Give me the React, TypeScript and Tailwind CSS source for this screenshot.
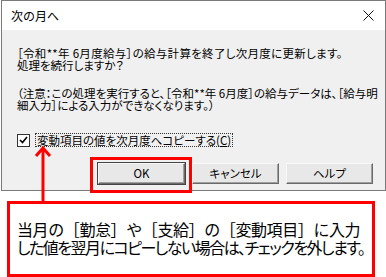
export default function App() {
  const buttons = ["OK", "キャンセル", "ヘルプ"];

  return (
    <div className="relative w-[386px] h-[277px] bg-white overflow-hidden text-black font-['Noto_Sans_CJK_JP','Noto_Sans',sans-serif]">
      {/* dialog window */}
      <div className="ml-[1px] w-[385px] h-[191px] border border-[#7a7a7a] flex flex-col">
        <div className="h-[29px] bg-white flex items-center justify-between pl-[9px] pr-[10px]">
          <span className="text-[12px] leading-none">次の月へ</span>
          <svg width="11" height="11" viewBox="0 0 11 11" className="mr-[1px]">
            <path d="M0.5 0.5 L10.5 10.5 M10.5 0.5 L0.5 10.5" stroke="#111" strokeWidth="1" />
          </svg>
        </div>

        <div className="flex-1 bg-[#f0f0f0] pl-[15px] pr-[12px] pt-[17px] flex flex-col text-[11.5px] leading-[12px] [font-feature-settings:'palt']">
          <p className="whitespace-nowrap tracking-[0.3px]">［令和**年 6月度給与］の給与計算を終了し次月度に更新します。</p>
          <p className="whitespace-nowrap">処理を続行しますか？</p>
          <p className="whitespace-nowrap mt-[16px]">（注意：この処理を実行すると、［令和**年 6月度］の給与データは、［給与明</p>
          <p className="whitespace-nowrap">細入力］による入力ができなくなります。）</p>

          <div className="mt-[22px] flex items-center gap-[5px]">
            <span className="w-[13px] h-[13px] bg-white border border-[#333] flex items-center justify-center">
              <svg width="9" height="8" viewBox="0 0 9 8">
                <path d="M1 4 L3.5 6.5 L8 1" stroke="#000" strokeWidth="1.6" fill="none" />
              </svg>
            </span>
            <span className="px-[1px] border border-dotted border-[#333] leading-[12px] whitespace-nowrap">
              変動項目の値を次月度へコピーする(<span className="underline">C</span>)
            </span>
          </div>

          <div className="mt-[16px] flex justify-end gap-[7px]">
            {buttons.map((b, i) => (
              <button
                key={b}
                className={
                  "w-[87px] h-[21px] bg-[#e8e8e8] text-[11.5px] leading-none border border-t-[#f8f8f8] border-l-[#f8f8f8] border-r-[#6a6a6a] border-b-[#6a6a6a] shadow-[inset_-1px_-1px_0_#a0a0a0]" +
                  (i === 0 ? " outline outline-1 outline-[#444]" : "")
                }
              >
                {b}
              </button>
            ))}
          </div>
        </div>
      </div>

      {/* callout */}
      <div className="mt-[10px] ml-[7px] w-[368px] h-[76px] border-[3px] border-[#ff0000] pl-[7px] pt-[16px] text-[16px] leading-[18px]">
        <p className="whitespace-nowrap tracking-[-0.4px]">当月の［勤怠］や［支給］の［変動項目］に入力</p>
        <p className="whitespace-nowrap tracking-[-1.5px] [font-feature-settings:'palt']">した値を翌月にコピーしない場合は、チェックを外します。</p>
      </div>

      {/* highlight around OK */}
      <div className="absolute left-[90px] top-[157px] w-[102px] h-[36px] border-[3px] border-[#ff0000]" />

      {/* arrow from callout to checkbox */}
      <svg className="absolute left-[33px] top-[145px]" width="22" height="58" viewBox="0 0 22 58">
        <path d="M10 3 L10 58" stroke="#ff0000" strokeWidth="3" />
        <path d="M3 11 L10 3 L17 11" stroke="#ff0000" strokeWidth="3" fill="none" />
      </svg>
    </div>
  );
}
